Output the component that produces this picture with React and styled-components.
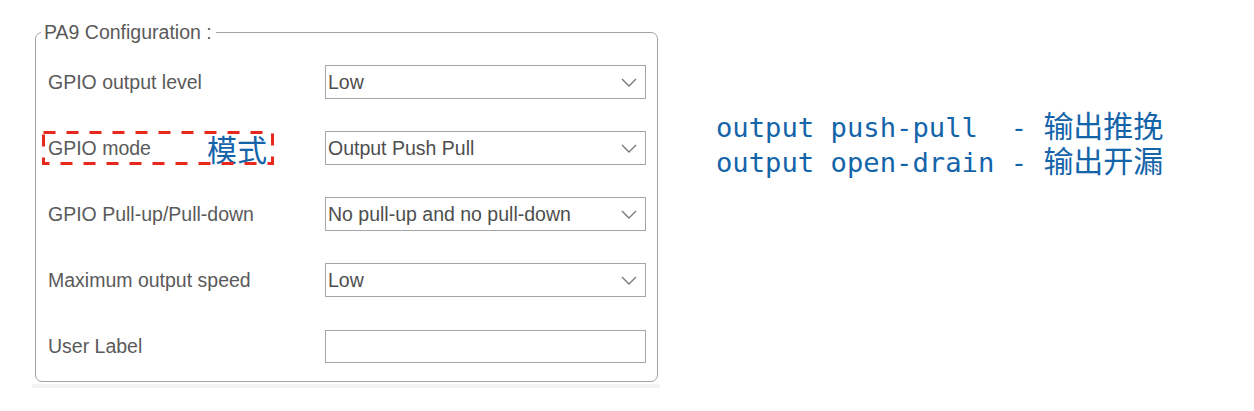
import React from 'react'
import styled, { createGlobalStyle } from 'styled-components'

const GlobalStyle = createGlobalStyle`
  html, body {
    margin: 0;
    background: #ffffff;
  }
`

const Page = styled.div`
  display: flex;
  align-items: flex-start;
  width: 1254px;
  height: 411px;
  overflow: hidden;
  background: #fff;
`

const Panel = styled.div`
  margin: 21px 0 0 32px;
  width: 628px;
  padding-bottom: 2px;
  border-bottom: 4px solid #f3f3f3;
`

const Group = styled.fieldset`
  margin: 0 0 0 3px;
  width: 623px;
  box-sizing: border-box;
  padding: 0 11px 18px 12px;
  border: 1px solid #a3a3a3;
  border-radius: 7px;
  font-family: "Liberation Sans", Arial, sans-serif;
  color: #555;
`

const Legend = styled.legend`
  margin-left: -7px;
  padding: 0 4px 0 3px;
  font-size: 19.5px;
  line-height: 22px;
  color: #5a5a5a;
`

const Rows = styled.div`
  display: grid;
  grid-template-columns: 277px 1fr;
  grid-auto-rows: 34px;
  row-gap: 32px;
  padding-top: 22px;
  align-items: center;
`

const Label = styled.div`
  font-size: 19.5px;
  color: #5a5a5a;
  white-space: nowrap;
`

const Marked = styled.div`
  position: relative;
  display: flex;
  align-items: center;
  justify-content: space-between;
  box-sizing: border-box;
  width: 232px;
  height: 34px;
  margin-left: -6px;
  padding: 0 7px 0 6px;
`

const Dashes = styled.svg`
  position: absolute;
  inset: 0;
  pointer-events: none;
`

const Note = styled.span`
  font-family: "Noto Sans CJK SC", sans-serif;
  font-size: 30px;
  line-height: 1;
  color: #1464aa;
`

const Field = styled.div`
  display: flex;
  align-items: center;
  justify-content: space-between;
  box-sizing: border-box;
  height: ${p => (p.$plain ? '33px' : '34px')};
  padding: 0 8px 0 2px;
  border: 1px solid #a6a6a6;
  background: #fff;
  font-size: 19.5px;
  color: #4e4e4e;
  white-space: nowrap;
`

const Chevron = () => (
  <svg width="16" height="9" viewBox="0 0 16 9">
    <path d="M1 1 L8 8 L15 1" fill="none" stroke="#7a7a7a" strokeWidth="1.4" />
  </svg>
)

const Side = styled.div`
  margin: 109px 0 0 56px;
  font-family: "DejaVu Sans Mono", "Liberation Mono", monospace;
  font-size: 27.2px;
  line-height: 35px;
  color: #1464aa;
  white-space: pre;
`

const Line = styled.div`
  height: 35px;
`

const Han = styled.span`
  font-family: "Noto Sans CJK SC", sans-serif;
  font-size: 30px;
  line-height: 1;
`

const rows = [
  { label: 'GPIO output level', value: 'Low' },
  { label: 'GPIO mode', value: 'Output Push Pull', note: '模式' },
  { label: 'GPIO Pull-up/Pull-down', value: 'No pull-up and no pull-down' },
  { label: 'Maximum output speed', value: 'Low' },
  { label: 'User Label', value: null },
]

export default function App() {
  return (
    <Page>
      <GlobalStyle />
      <Panel>
        <Group>
          <Legend>PA9 Configuration :</Legend>
          <Rows>
            {rows.map(r => (
              <React.Fragment key={r.label}>
                {r.note ? (
                  <Marked>
                    <Dashes width="232" height="34" viewBox="0 0 232 34">
                      <rect x="1.5" y="1.5" width="229" height="31" fill="none"
                        stroke="#e8281c" strokeWidth="3" strokeDasharray="12 11" />
                    </Dashes>
                    <Label>{r.label}</Label>
                    <Note>{r.note}</Note>
                  </Marked>
                ) : (
                  <Label>{r.label}</Label>
                )}
                {r.value ? (
                  <Field>
                    <span>{r.value}</span>
                    <Chevron />
                  </Field>
                ) : (
                  <Field $plain />
                )}
              </React.Fragment>
            ))}
          </Rows>
        </Group>
      </Panel>
      <Side>
        <Line>{'output push-pull  - '}<Han>输出推挽</Han></Line>
        <Line>{'output open-drain - '}<Han>输出开漏</Han></Line>
      </Side>
    </Page>
  )
}
